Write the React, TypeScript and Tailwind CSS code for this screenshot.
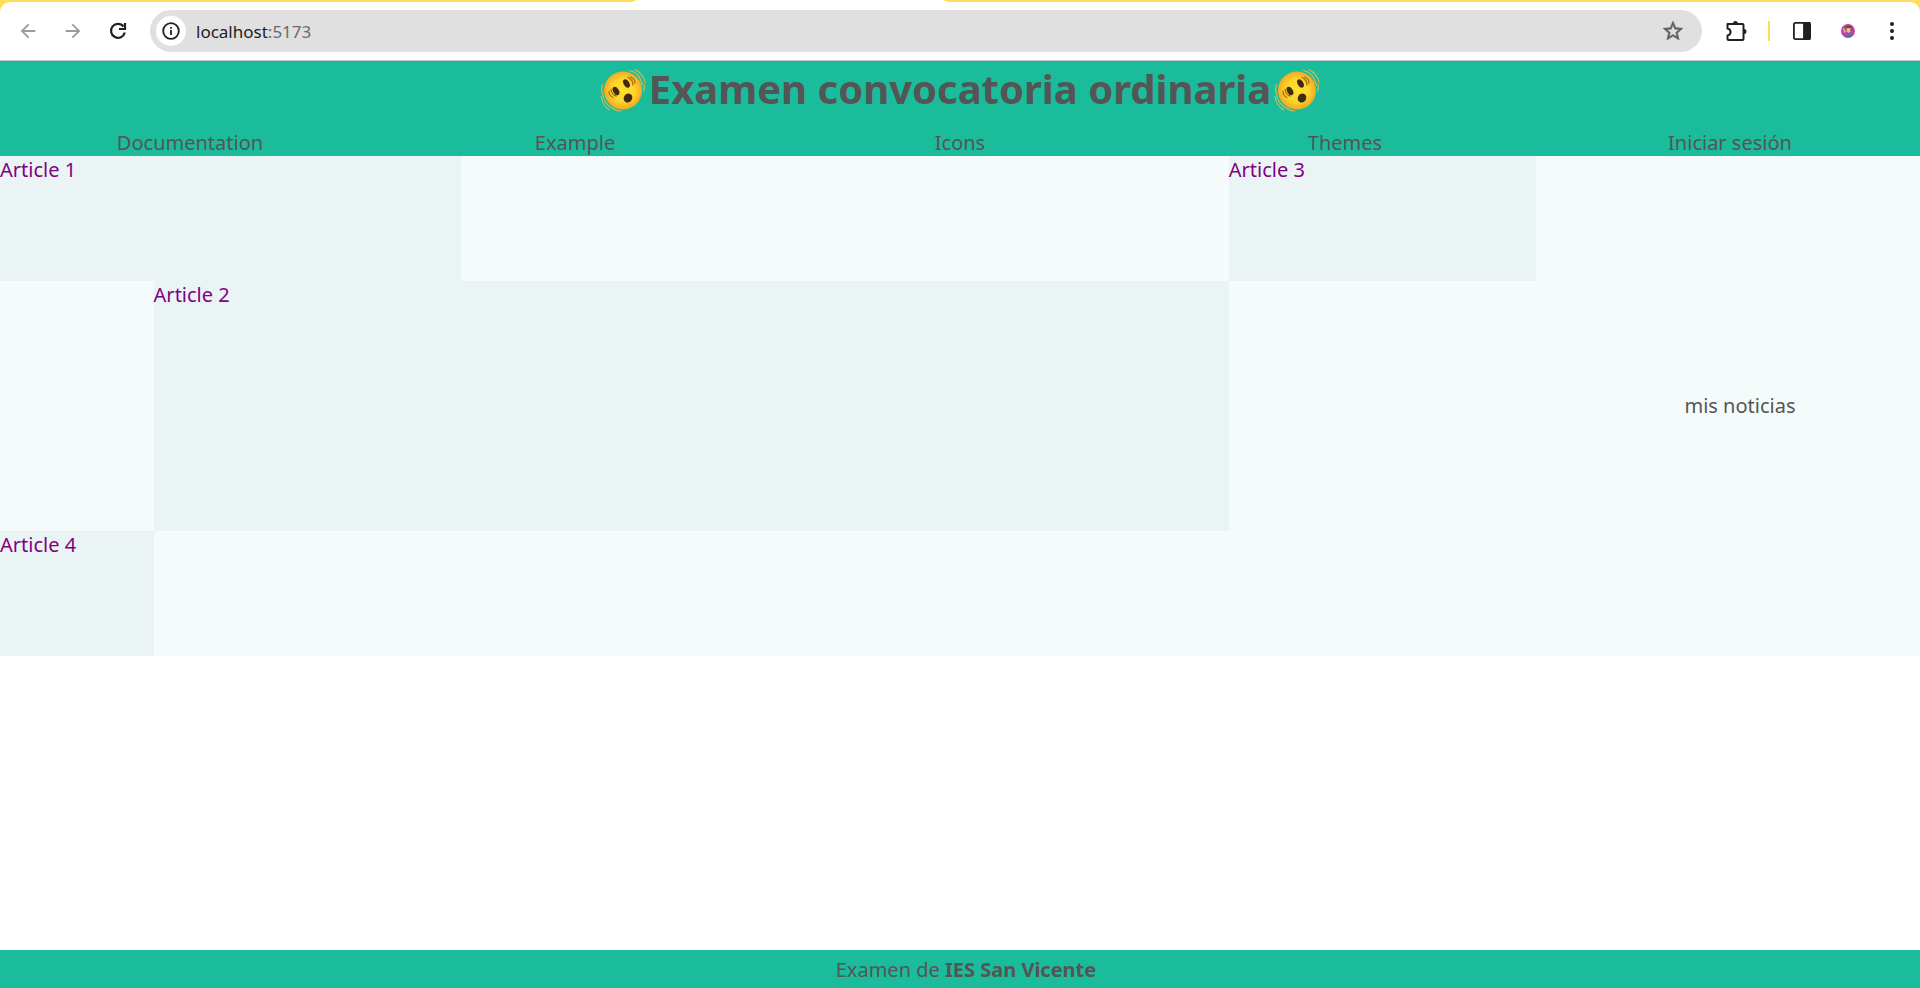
import type { ReactNode } from "react";

const navLinks = ["Documentation", "Example", "Icons", "Themes", "Iniciar sesión"];

const articles = [
  { title: "Article 1", area: "col-start-1 col-span-3 row-start-1" },
  { title: "Article 2", area: "col-start-2 col-span-7 row-start-2 row-span-2" },
  { title: "Article 3", area: "col-start-9 col-span-2 row-start-1" },
  { title: "Article 4", area: "col-start-1 row-start-4" },
];

function IconButton({ label, children }: { label: string; children: ReactNode }) {
  return (
    <button type="button" aria-label={label} className="flex size-6 items-center justify-center">
      {children}
    </button>
  );
}

function ShakingFace() {
  return (
    <svg viewBox="0 0 46 44" className="h-11 w-[46px] shrink-0" aria-hidden="true">
      <defs>
        <radialGradient id="face" cx="50%" cy="50%" r="50%">
          <stop offset="0" stopColor="#fee02f" />
          <stop offset="0.6" stopColor="#fdd42d" />
          <stop offset="1" stopColor="#f3aa20" />
        </radialGradient>
      </defs>
      <circle cx="23" cy="22.500" r="19" fill="url(#face)" />
      <g fill="none" stroke="#dbb84c" strokeWidth="1.100" strokeLinecap="round">
        <path d="M29.500 2.500Q39 4 42.500 17" />
        <path d="M35 1.500Q43.500 6 45 14.500" />
        <path d="M44 16.500Q45 20 43.500 23" />
        <path d="M2.500 24Q3 36.500 14 41" />
        <path d="M1 28Q2 37 9.500 42" />
        <path d="M13 40.500Q16 43 21 43" />
        <path d="M2.500 16.500Q1 20.500 2 25" />
      </g>
      <g fill="none" stroke="#a06f1c" strokeWidth="1.300" strokeLinecap="round">
        <path d="M11 21.500Q12 27 16 28" />
        <path d="M9 23.500Q9.500 28 13 29.500" />
        <path d="M28 9.500Q33 12 33 17" />
        <path d="M30.500 9Q35 11 35 15" />
      </g>
      <g fill="#422b0d">
        <ellipse cx="16" cy="23" rx="2.800" ry="4.600" transform="rotate(-30 16 23)" />
        <ellipse cx="26.500" cy="15.500" rx="2.800" ry="4.600" transform="rotate(-30 26.500 15.500)" />
        <ellipse cx="28" cy="30" rx="4.200" ry="4.700" transform="rotate(30 28 30)" />
      </g>
    </svg>
  );
}

function BrowserBar() {
  return (
    <div className="bg-[#ffdd5a]">
      <div className="flex h-0.5">
        <svg viewBox="0 0 320 2" className="ml-[32.8%] h-0.5 w-80" aria-hidden="true">
          <path d="M0 2q5-.5 6-2H314q1 1.500 6 2z" fill="#fff" />
        </svg>
      </div>
      <div className="flex h-[59px] items-center rounded-t-[10px] border-b border-[#c4c4c4] bg-white px-4 text-[#1f2023]">
        <div className="flex gap-[21px]">
          <IconButton label="Back">
            <svg viewBox="0 0 24 24" className="size-[22px]" fill="#9b9b9d">
              <path d="M20 11H7.830l5.590-5.590L12 4l-8 8 8 8 1.410-1.410L7.830 13H20z" />
            </svg>
          </IconButton>
          <IconButton label="Forward">
            <svg viewBox="0 0 24 24" className="size-[22px]" fill="#9b9b9d">
              <path d="M4 13h12.170l-5.590 5.590L12 20l8-8-8-8-1.410 1.410L16.170 11H4z" />
            </svg>
          </IconButton>
          <IconButton label="Reload">
            <svg viewBox="0 0 20 20" className="size-5" fill="none" stroke="currentColor" strokeWidth="2.200">
              <path d="M16.800 11.500A7 7 0 1 1 15.500 5.500" />
              <path d="M17 2V8H11" />
            </svg>
          </IconButton>
        </div>
        <div className="ml-5 flex h-[42px] flex-1 items-center rounded-full bg-[#e0e0e0] pr-[17px] pl-1.5">
          <button
            type="button"
            aria-label="Site information"
            className="flex size-[30px] items-center justify-center rounded-full bg-white"
          >
            <svg viewBox="0 0 18 18" className="size-[18px]" fill="none" stroke="currentColor" strokeWidth="1.800">
              <circle cx="9" cy="9" r="7.800" />
              <path d="M9 8v5M9 5v1.800" />
            </svg>
          </button>
          <div role="textbox" aria-label="Address" className="ml-2.5 flex-1 pt-0.5 text-[17px] leading-6">
            localhost<span className="text-[#6a6a6c]">:5173</span>
          </div>
          <IconButton label="Bookmark">
            <svg viewBox="0 0 24 24" className="size-6" fill="#5f6062" stroke="#5f6062" strokeWidth="0.500">
              <path d="M22 9.240l-7.190-.620L12 2 9.190 8.630 2 9.240l5.460 4.730L5.820 21 12 17.270 18.180 21l-1.630-7.030zM12 15.400l-3.760 2.270 1-4.280-3.320-2.880 4.380-.380L12 6.100l1.710 4.040 4.380.380-3.320 2.880 1 4.280z" />
            </svg>
          </IconButton>
        </div>
        <div className="ml-[22px] flex items-center">
          <IconButton label="Extensions">
            <svg viewBox="0 0 24 24" className="size-6" fill="none" stroke="currentColor" strokeWidth="2" strokeLinejoin="round">
              <path d="M3.500 5H18.500Q19.500 5 19.500 6V20Q19.500 21 18.500 21H4.500Q3.500 21 3.500 20V16.500Q6.500 16 6.500 13T3.500 9.500Z" />
              <path d="M9 4.500a2.500 2.500 0 0 1 5 0zM20 10a2.500 2.500 0 0 1 0 5z" fill="currentColor" stroke="none" />
            </svg>
          </IconButton>
          <div className="mx-5 h-5 w-0.5 bg-[#ffdd5a]" />
          <IconButton label="Side panel">
            <svg viewBox="0 0 18 18" className="size-[18px]" fill="none" stroke="currentColor" strokeWidth="1.800">
              <rect x="0.900" y="0.900" width="16.200" height="16.200" rx="1.500" />
              <path d="M11 1H16.500V17H11z" fill="currentColor" />
            </svg>
          </IconButton>
          <div className="w-[22px]" />
          <IconButton label="Profile">
            <svg viewBox="0 0 14 14" className="size-3.5">
              <circle cx="7" cy="7" r="7" fill="#bb43b2" />
              <path d="M4.500 4q0-2.500 3-2.500t3 2.500v3h-6z" fill="#704333" />
              <path d="M5.500 4h4v3.500l-2 1.500-2-1.500z" fill="#ebb98b" />
              <path d="M2 4l2 1 1 4-2-.500z" fill="#ddb196" />
              <path d="M4 8l2 1h4l2-.500v2l-2 .500H5z" fill="#d04859" />
              <path d="M6 9.500h3.500l1 3q-2.500 1.500-5 0z" fill="#327bbd" />
            </svg>
          </IconButton>
          <div className="w-5" />
          <IconButton label="Menu">
            <svg viewBox="0 0 24 24" className="size-6" fill="currentColor">
              <circle cx="12" cy="5" r="2" />
              <circle cx="12" cy="12" r="2" />
              <circle cx="12" cy="19" r="2" />
            </svg>
          </IconButton>
        </div>
      </div>
    </div>
  );
}

export default function App() {
  return (
    <div className="flex min-h-screen flex-col bg-white font-['Noto_Sans',sans-serif] text-xl text-[#555]">
      <BrowserBar />
      <header className="bg-[#1abc9c]">
        <h1 className="flex h-[68px] items-start justify-center gap-[3px] text-[40px] leading-[56px] font-bold">
          <span className="pt-[7px]">
            <ShakingFace />
          </span>
          <span>Examen convocatoria ordinaria</span>
          <span className="pt-[7px]">
            <ShakingFace />
          </span>
        </h1>
        <nav className="grid grid-cols-5 gap-x-[5px] text-center leading-[27px]">
          {navLinks.map((link) => (
            <a key={link} href="#">
              {link}
            </a>
          ))}
        </nav>
      </header>
      <div className="grid grid-cols-[4fr_1fr] bg-[#f5fbfb]">
        <main className="grid auto-rows-[125px] grid-cols-10">
          {articles.map(({ title, area }) => (
            <article key={title} className={`bg-[#ebf4f5] leading-7 text-[#800080] ${area}`}>
              {title}
            </article>
          ))}
        </main>
        <aside className="flex items-center justify-center pl-6">mis noticias</aside>
      </div>
      <footer className="mt-auto bg-[#1abc9c] pt-1.5 pb-1 pl-3 text-center leading-7">
        Examen de <strong>IES San Vicente</strong>
      </footer>
    </div>
  );
}
